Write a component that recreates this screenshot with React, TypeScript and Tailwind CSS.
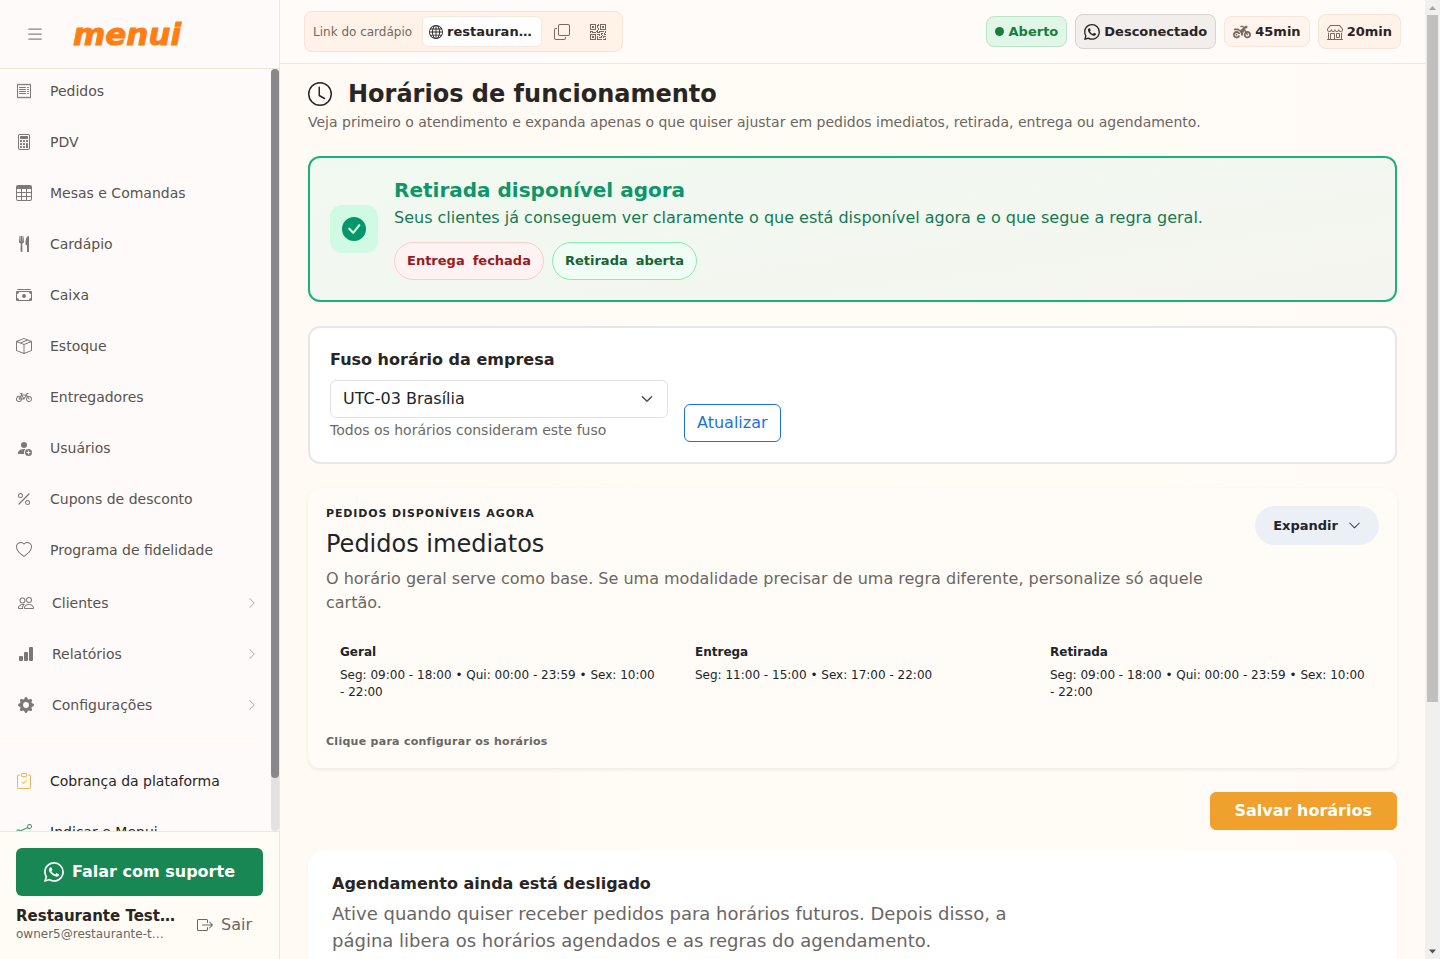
import React, { useState } from 'react';
import type { ComponentType } from 'react';
import clsx from 'clsx';
import {
  BsBarChartFill,
  BsBicycle,
  BsBoxArrowRight,
  BsBoxSeam,
  BsCalculator,
  BsCashStack,
  BsCheckCircleFill,
  BsChevronDown,
  BsChevronRight,
  BsClipboardCheck,
  BsClock,
  BsCopy,
  BsGearFill,
  BsGlobe,
  BsHeart,
  BsList,
  BsPeople,
  BsPercent,
  BsPersonFillAdd,
  BsQrCode,
  BsReceipt,
  BsShare,
  BsShop,
  BsTable,
  BsWhatsapp,
} from 'react-icons/bs';
import { FaMotorcycle } from 'react-icons/fa6';

// not shipped in react-icons/bs
function ForkKnife({ className }: { className?: string }) {
  return (
    <svg viewBox="0 0 16 16" fill="currentColor" className={className} aria-hidden="true">
      <path d="M13 .5c0-.276-.226-.506-.498-.465-1.703.257-2.94 2.012-3 8.462a.5.5 0 0 0 .498.5c.56.01 1 .13 1 1.003v5.5a.5.5 0 0 0 .5.5h1a.5.5 0 0 0 .5-.5zM4.250 0a.25.25 0 0 1 .25.25v5.122a.128.128 0 0 0 .256.006l.233-5.140A.25.25 0 0 1 5.240 0h.522a.25.25 0 0 1 .25.238l.233 5.140a.128.128 0 0 0 .256-.006V.25A.25.25 0 0 1 6.750 0h.29a.5.5 0 0 1 .498.458l.423 5.070a1.690 1.690 0 0 1-1.059 1.711l-.053.022a.92.92 0 0 0-.58.884L6.470 15a.971.971 0 1 1-1.942 0l.202-6.855a.92.92 0 0 0-.58-.884l-.053-.022a1.690 1.690 0 0 1-1.059-1.712L3.462.458A.5.5 0 0 1 3.960 0z" />
    </svg>
  );
}

type NavItem = { label: string; icon: ComponentType<{ className?: string }>; iconClass?: string };

const mainItems: NavItem[] = [
  { label: 'Pedidos', icon: BsReceipt },
  { label: 'PDV', icon: BsCalculator },
  { label: 'Mesas e Comandas', icon: BsTable },
  { label: 'Cardápio', icon: ForkKnife },
  { label: 'Caixa', icon: BsCashStack },
  { label: 'Estoque', icon: BsBoxSeam },
  { label: 'Entregadores', icon: BsBicycle },
  { label: 'Usuários', icon: BsPersonFillAdd },
  { label: 'Cupons de desconto', icon: BsPercent },
  { label: 'Programa de fidelidade', icon: BsHeart },
];

const groupItems: NavItem[] = [
  { label: 'Clientes', icon: BsPeople },
  { label: 'Relatórios', icon: BsBarChartFill },
  { label: 'Configurações', icon: BsGearFill },
];

const extraItems: NavItem[] = [
  { label: 'Cobrança da plataforma', icon: BsClipboardCheck, iconClass: 'text-[#f0b45a]' },
  { label: 'Indicar e Menui', icon: BsShare, iconClass: 'text-[#3f9c72]' },
];

const schedules = [
  { title: 'Geral', hours: 'Seg: 09:00 - 18:00 • Qui: 00:00 - 23:59 • Sex: 10:00 - 22:00' },
  { title: 'Entrega', hours: 'Seg: 11:00 - 15:00 • Sex: 17:00 - 22:00' },
  { title: 'Retirada', hours: 'Seg: 09:00 - 18:00 • Qui: 00:00 - 23:59 • Sex: 10:00 - 22:00' },
];

function SideLink({ item, dark }: { item: NavItem; dark?: boolean }) {
  const Icon = item.icon;
  return (
    <li>
      <a
        href="#"
        className={clsx('flex h-[51px] items-center gap-[18px] px-4 text-sm', dark ? 'text-[#292524]' : 'text-[#57534e]')}
      >
        <Icon className={clsx('h-4 w-4 shrink-0', item.iconClass ?? 'text-[#7c7876]')} />
        {item.label}
      </a>
    </li>
  );
}

function Sidebar() {
  return (
    <aside className="flex w-[280px] shrink-0 flex-col border-r border-[#efe5dc] bg-[#fffafa]">
      <div className="flex h-[69px] shrink-0 items-center border-b border-[#efe6d8] pl-[25px]">
        <button type="button" aria-label="Menu" className="mr-7 text-[#8a8583]">
          <BsList className="h-5 w-5" />
        </button>
        <a href="#" className="text-[31px] leading-10 font-bold text-[#fd7e14] italic [-webkit-text-stroke:1px_#fd7e14]">
          menui
        </a>
      </div>

      <div className="flex min-h-0 flex-1">
        <nav className="min-w-0 flex-1 overflow-hidden">
          <ul className="-mt-1">
            {mainItems.map((item) => (
              <SideLink key={item.label} item={item} />
            ))}
          </ul>
          <ul className="mt-0.5">
            {groupItems.map(({ label, icon: Icon }) => (
              <li key={label}>
                <button type="button" className="flex h-[51px] w-full items-center gap-[18px] pr-[13px] pl-[18px] text-sm text-[#57534e]">
                  <Icon className="h-4 w-4 shrink-0 text-[#7c7876]" />
                  {label}
                  <BsChevronRight className="ml-auto h-3 w-3 text-[#a8a5a3]" />
                </button>
              </li>
            ))}
          </ul>
          <hr className="mt-2 mr-4 mb-4 border-[#fff8ec]" />
          <ul>
            {extraItems.map((item) => (
              <SideLink key={item.label} item={item} dark />
            ))}
          </ul>
        </nav>
        <div className="w-2 shrink-0 rounded-full bg-[#e3e2e1]">
          <div className="h-[93%] rounded-full bg-[#888888]" />
        </div>
      </div>

      <div className="shrink-0 border-t border-[#efe6d8] bg-[#fffbf5] p-4">
        <button type="button" className="flex h-12 w-full items-center justify-center gap-2 rounded-md bg-[#198754] font-bold text-white">
          <BsWhatsapp className="h-5 w-5" />
          Falar com suporte
        </button>
        <div className="mt-[11px] flex items-center justify-between pr-[11px]">
          <div>
            <p className="text-[15px] leading-[18px] font-bold text-[#292524]">Restaurante Test…</p>
            <p className="text-xs leading-[18px] text-[#6b6663]">owner5@restaurante-t…</p>
          </div>
          <button type="button" className="flex items-center gap-2 text-[#6b6663]">
            <BsBoxArrowRight className="h-4 w-4" />
            Sair
          </button>
        </div>
      </div>
    </aside>
  );
}

function Topbar() {
  return (
    <header className="flex h-16 shrink-0 items-center justify-between border-b border-[#f0e8d8] bg-[#fffbf8] px-6 text-[13px]">
      <div className="flex h-[41px] items-center rounded-lg border border-[#f8e3d5] bg-[#fff2e8] pr-4 pl-2">
        <span className="w-[109px] text-xs text-[#78685e]">Link do cardápio</span>
        <a href="#" className="flex h-[31px] w-[120px] items-center gap-1 rounded-md border border-[#f6e8dd] bg-white px-1.5 font-bold text-[#292524]">
          <BsGlobe className="h-3.5 w-3.5" />
          restauran…
        </a>
        <button type="button" aria-label="Copiar link" className="ml-3 text-[#78685e]">
          <BsCopy className="h-4 w-4" />
        </button>
        <button type="button" aria-label="QR Code" className="ml-5 text-[#78685e]">
          <BsQrCode className="h-4 w-4" />
        </button>
      </div>

      <div className="flex items-center gap-2 font-bold text-[#292524]">
        <button type="button" className="flex h-[31px] items-center gap-[5px] rounded-lg border border-[#b5e8c8] bg-[#e2f6e8] px-2 text-[#15803d]">
          <span className="h-[9px] w-[9px] rounded-full bg-[#15803d]" />
          Aberto
        </button>
        <button type="button" className="flex h-[35px] items-center gap-1 rounded-lg border border-[#d6d3d1] bg-[#f1eeeb] px-2">
          <BsWhatsapp className="h-4 w-4" />
          Desconectado
        </button>
        <button type="button" className="flex h-[31px] items-center gap-1 rounded-lg border border-[#fbe3d6] bg-[#fff4ee] px-2">
          <FaMotorcycle className="h-4 w-[18px] text-[#78685e]" />
          45min
        </button>
        <button type="button" className="flex h-[35px] items-center gap-1 rounded-lg border border-[#fbe3d6] bg-[#fff2e8] px-2">
          <BsShop className="h-4 w-4 text-[#78685e]" />
          20min
        </button>
      </div>
    </header>
  );
}

function StatusCard() {
  return (
    <section className="mt-6 flex items-center gap-4 rounded-xl border-2 border-[#1cb17c] bg-linear-to-br from-[#f0f9f1] to-[#f5f5ef] p-5">
      <div className="flex h-12 w-12 shrink-0 items-center justify-center rounded-xl bg-[#d1fae5] text-[#059669]">
        <BsCheckCircleFill className="h-6 w-6" />
      </div>
      <div>
        <h2 className="text-xl leading-6 font-bold text-[#0d9668]">Retirada disponível agora</h2>
        <p className="mt-1 leading-6 text-[#147a53]">
          Seus clientes já conseguem ver claramente o que está disponível agora e o que segue a regra geral.
        </p>
        <div className="mt-3 flex gap-2 text-[13px] font-bold">
          <span className="flex h-[38px] items-center gap-2 rounded-full border border-[#fecaca] bg-[#fef2f2] px-3 text-[#991b1b]">
            <span>Entrega</span>
            <span>fechada</span>
          </span>
          <span className="flex h-[38px] items-center gap-2 rounded-full border border-[#86efac] bg-[#f0fdf4] px-3 text-[#166534]">
            <span>Retirada</span>
            <span>aberta</span>
          </span>
        </div>
      </div>
    </section>
  );
}

function TimezoneCard() {
  return (
    <section className="mt-6 flex items-end gap-4 rounded-xl border-2 border-[#e5e7eb] bg-white p-5">
      <div>
        <label htmlFor="timezone" className="mb-2 block leading-6 font-bold text-[#292524]">
          Fuso horário da empresa
        </label>
        <div className="relative w-[338px]">
          <select
            id="timezone"
            className="h-[38px] w-full appearance-none rounded-md border border-[#dee2e6] bg-white px-3 text-[#212529]"
          >
            <option>UTC-03 Brasília</option>
          </select>
          <BsChevronDown className="pointer-events-none absolute top-[13px] right-[15px] h-3 w-3 stroke-1 text-[#343a40]" />
        </div>
        <p className="text-sm leading-6 text-[#6c6a69]">Todos os horários consideram este fuso</p>
      </div>
      <button type="button" className="h-[38px] rounded-md border border-[#1a73e0] px-3 text-[#1a73e0]">
        Atualizar
      </button>
    </section>
  );
}

function OrdersCard() {
  const [open, setOpen] = useState(false);
  return (
    <section className="mt-6 rounded-xl bg-[#fffcf8] p-[18px] shadow-[0_2px_4px_rgba(0,0,0,0.07)]">
      <div className="flex items-start gap-4">
        <div className="flex-1">
          <p className="text-[11px] leading-4 font-bold tracking-[0.08em] text-[#212529] uppercase">Pedidos disponíveis agora</p>
          <h2 className="mt-2 text-2xl leading-[29px] text-[#212529]">Pedidos imediatos</h2>
          <p className="mt-2 leading-6 text-[#6b6663]">
            O horário geral serve como base. Se uma modalidade precisar de uma regra diferente, personalize só aquele cartão.
          </p>
        </div>
        <button
          type="button"
          aria-expanded={open}
          onClick={() => setOpen(!open)}
          className="flex h-[39px] items-center gap-2.5 rounded-full bg-[#ebf0f7] px-[18px] text-[13px] font-bold text-[#212529]"
        >
          Expandir
          <BsChevronDown className={clsx('h-[13px] w-[13px]', open && 'rotate-180')} />
        </button>
      </div>
      <div className="mt-4 grid grid-cols-3 gap-3">
        {schedules.map((s) => (
          <div key={s.title} className="px-3.5 py-3 text-xs text-[#212529]">
            <h3 className="leading-[18px] font-bold">{s.title}</h3>
            <p className="mt-1.5 leading-[17px]">{s.hours}</p>
          </div>
        ))}
      </div>
      <p className="mt-[21px] text-[11px] leading-4 font-bold tracking-wide text-[#6b6663]">Clique para configurar os horários</p>
    </section>
  );
}

function PageScrollbar() {
  return (
    <div aria-hidden="true" className="flex w-[15px] shrink-0 flex-col items-center bg-[#f1f0ef]">
      <svg viewBox="0 0 15 15" className="h-[15px] w-[15px] shrink-0">
        <path d="M4 10l3.5-4 3.5 4z" fill="#a3a3a3" />
      </svg>
      <div className="min-h-0 w-full flex-1 px-0.5">
        <div className="h-[74%] bg-[#c1c0bf]" />
      </div>
      <svg viewBox="0 0 15 15" className="h-[15px] w-[15px] shrink-0">
        <path d="M4 5.500l3.500 4 3.500-4z" fill="#505050" />
      </svg>
    </div>
  );
}

export default function App() {
  return (
    <div className="flex h-screen overflow-hidden bg-[#fffbf5] font-['DejaVu_Sans',sans-serif] text-base text-[#292524]">
      <Sidebar />
      <div className="flex min-w-0 flex-1 flex-col">
        <Topbar />
        <main className="min-h-0 flex-1 overflow-hidden bg-linear-to-r from-[#fffaf3] via-[#fffcf6] to-[#fffaf5] px-7 pt-4">
          <h1 className="flex items-center gap-4 text-2xl leading-7 font-bold">
            <BsClock className="h-6 w-6" />
            Horários de funcionamento
          </h1>
          <p className="mt-1 text-sm leading-5 text-[#6b6663]">
            Veja primeiro o atendimento e expanda apenas o que quiser ajustar em pedidos imediatos, retirada, entrega ou agendamento.
          </p>
          <StatusCard />
          <TimezoneCard />
          <OrdersCard />
          <div className="mt-6 flex justify-end">
            <button type="button" className="h-[38px] rounded-md border border-[#f0a02c] bg-[#f0a02c] px-6 font-bold text-white">
              Salvar horários
            </button>
          </div>
          <section className="mt-5 rounded-2xl bg-white px-6 pt-[22px] pb-6 shadow-xs">
            <h2 className="leading-6 font-bold">Agendamento ainda está desligado</h2>
            <p className="mt-1 max-w-[700px] text-lg leading-[27px] text-[#6b6663]">
              Ative quando quiser receber pedidos para horários futuros. Depois disso, a página libera os horários agendados e as
              regras do agendamento.
            </p>
          </section>
        </main>
      </div>
      <PageScrollbar />
    </div>
  );
}
